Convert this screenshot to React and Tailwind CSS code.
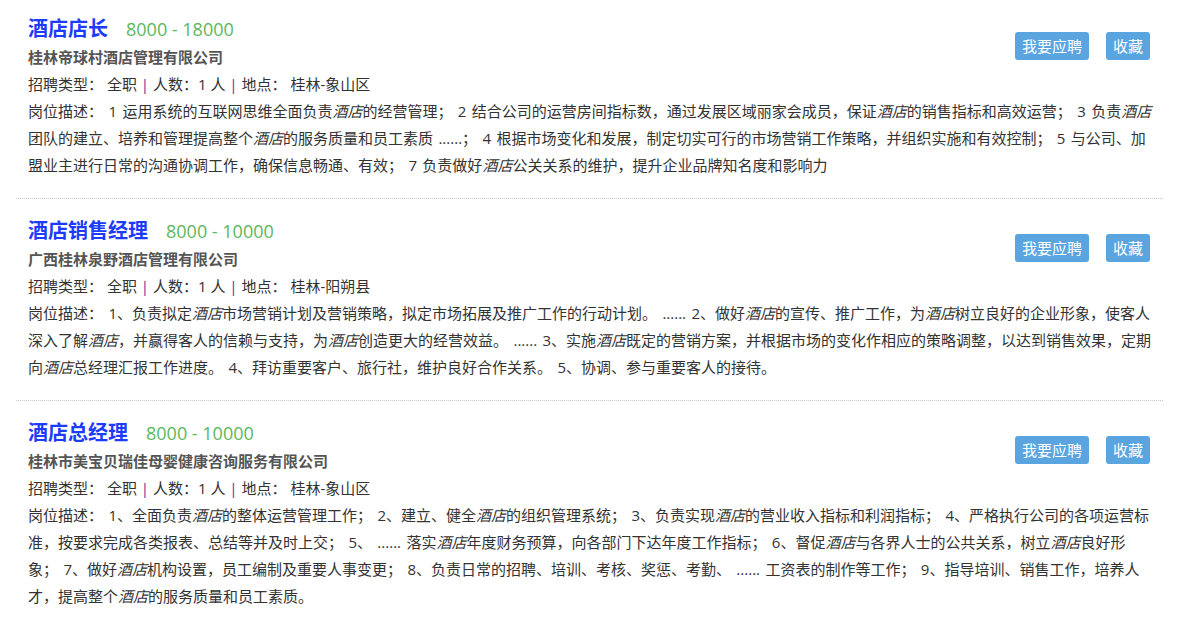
const jobs = [
  {
    title: '酒店店长',
    salary: '8000 - 18000',
    company: '桂林帝球村酒店管理有限公司',
    place: '桂林-象山区',
    desc: [
      '1 运用系统的互联网思维全面负责', '*', '的经营管理； 2 结合公司的运营房间指标数，通过发展区域丽家会成员，保证', '*',
      '的销售指标和高效运营； 3 负责', '*', '团队的建立、培养和管理提高整个', '*',
      '的服务质量和员工素质 ......； 4 根据市场变化和发展，制定切实可行的市场营销工作策略，并组织实施和有效控制； 5 与公司、加盟业主进行日常的沟通协调工作，确保信息畅通、有效； 7 负责做好', '*',
      '公关关系的维护，提升企业品牌知名度和影响力',
    ],
  },
  {
    title: '酒店销售经理',
    salary: '8000 - 10000',
    company: '广西桂林泉野酒店管理有限公司',
    place: '桂林-阳朔县',
    desc: [
      '1、负责拟定', '*', '市场营销计划及营销策略，拟定市场拓展及推广工作的行动计划。 ...... 2、做好', '*', '的宣传、推广工作，为', '*',
      '树立良好的企业形象，使客人深入了解', '*', '，并赢得客人的信赖与支持，为', '*', '创造更大的经营效益。 ...... 3、实施', '*',
      '既定的营销方案，并根据市场的变化作相应的策略调整，以达到销售效果，定期向', '*', '总经理汇报工作进度。 4、拜访重要客户、旅行社，维护良好合作关系。 5、协调、参与重要客人的接待。',
    ],
  },
  {
    title: '酒店总经理',
    salary: '8000 - 10000',
    company: '桂林市美宝贝瑞佳母婴健康咨询服务有限公司',
    place: '桂林-象山区',
    desc: [
      '1、全面负责', '*', '的整体运营管理工作； 2、建立、健全', '*', '的组织管理系统； 3、负责实现', '*',
      '的营业收入指标和利润指标； 4、严格执行公司的各项运营标准，按要求完成各类报表、总结等并及时上交； 5、 ...... 落实', '*',
      '年度财务预算，向各部门下达年度工作指标； 6、督促', '*', '与各界人士的公共关系，树立', '*', '良好形象； 7、做好', '*',
      '机构设置，员工编制及重要人事变更； 8、负责日常的招聘、培训、考核、奖惩、考勤、 ...... 工资表的制作等工作； 9、指导培训、销售工作，培养人才，提高整个', '*',
      '的服务质量和员工素质。',
    ],
  },
];

function JobItem({ job, first }) {
  return (
    <div className={first ? 'ml-4 mr-[18px] pl-3 pr-[9.5px] pt-[14px] pb-[19px] border-b border-dotted border-[#c8c8c8]' : 'ml-4 mr-[18px] pl-3 pr-[9.5px] pt-[17px] pb-[19px] border-b border-dotted border-[#c8c8c8]'}>
      <div className="flex justify-between">
        <div>
          <div className="flex items-baseline leading-[30px]">
            <span className="text-[20px] font-bold text-[#1c3bfa]">{job.title}</span>
            <span className="ml-[18px] text-[18px] text-[#5cb85c]">{job.salary}</span>
          </div>
          <div className="text-[15px] leading-[27px] font-bold text-[#555]">{job.company}</div>
          <div className="text-[15px] leading-[27px] text-[#333]">
            招聘类型： 全职 <span className="text-[#6a2c9a]">|</span> 人数：1 人 <span className="text-[#6a2c9a]">|</span> 地点： {job.place}
          </div>
        </div>
        <div className="flex gap-[17px] mt-[18px] mr-[3.5px] items-start">
          <button className="h-7 px-[7px] rounded-[3px] bg-[#5aa5e0] text-white text-[15px] leading-7">我要应聘</button>
          <button className="h-7 px-[7px] rounded-[3px] bg-[#5aa5e0] text-white text-[15px] leading-7">收藏</button>
        </div>
      </div>
      <p className="text-[15px] leading-[27px] text-[#333] [word-spacing:1.5px]">
        岗位描述： {job.desc.map((part, i) => (part === '*' ? <em key={i}>酒店</em> : <span key={i}>{part}</span>))}
      </p>
    </div>
  );
}

export default function App() {
  return (
    <div className="w-[1181px] min-h-[627px] bg-white font-['Open_Sans','Noto_Sans_CJK_SC',sans-serif]">
      {jobs.map((job, i) => (
        <JobItem key={job.title} job={job} first={i === 0} />
      ))}
    </div>
  );
}
